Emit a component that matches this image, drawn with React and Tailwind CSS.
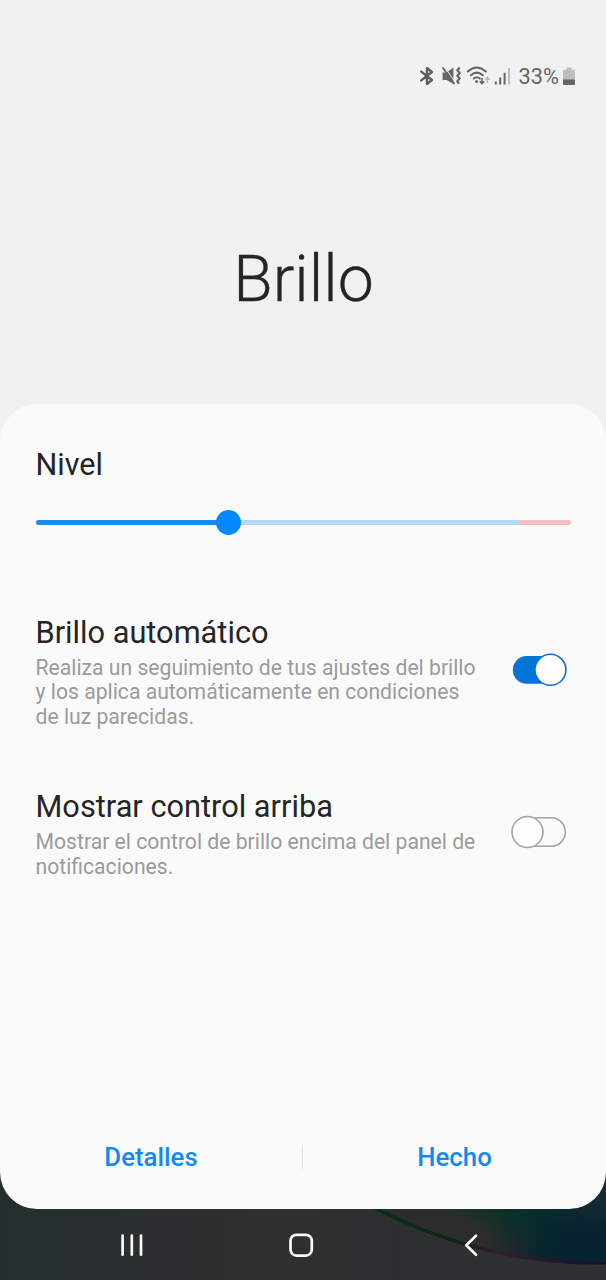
function StatusIcons() {
  return (
    <svg width="94" height="24" viewBox="416 64 94 24" fill="none" aria-hidden="true">
      {/* bluetooth */}
      <path d="M421.2 71.6 L432 80 L427 84 V68 L432 72 L421.2 80.4" stroke="#5f5f5f" strokeWidth="2.4" strokeLinejoin="round" strokeLinecap="round" />
      {/* muted, vibrate */}
      <path d="M442.6 72.5 H446.6 L453.4 67.5 V84 L446.6 80 H442.6 Z" fill="#666" />
      <path d="M444.6 67 L455.2 82.2" stroke="#f1f1f1" strokeWidth="0.9" />
      <path d="M443 68 L454 83.4" stroke="#666" strokeWidth="1.8" strokeLinecap="round" />
      <path d="M459.6 67.5 L457.4 70.3 L459.6 73 L457.4 75.7 L459.6 78.4 L457.4 81 L459 83.8" stroke="#666" strokeWidth="2.2" />
      {/* wifi */}
      <g stroke="#666" strokeWidth="2" strokeLinecap="round">
        <path d="M467.8 71.5 Q476.8 63.6 485.8 71.5" />
        <path d="M470.8 75.2 Q476.8 70 482.8 75.2" />
        <path d="M473.8 78.6 Q476.8 76 479.8 78.6" />
      </g>
      <circle cx="476.6" cy="81.6" r="1.5" fill="#666" />
      <path d="M482 78 V83.5 M479.8 81.4 L482 83.7 L484.2 81.4" stroke="#666" strokeWidth="1.6" />
      <path d="M487.4 83 V77.5 M485.2 79.8 L487.4 77.4 L489.6 79.8" stroke="#b7b7b7" strokeWidth="1.5" />
      {/* signal */}
      <path d="M495.8 81.4 V84.4 M500.2 77.5 V84.4 M504.6 72.8 V84.4" stroke="#666" strokeWidth="2" />
      <path d="M509 68 V84.4" stroke="#bebebe" strokeWidth="2" />
    </svg>
  );
}

function Battery() {
  return (
    <svg className="mt-[2px]" width="14" height="20" viewBox="0 0 14 20" aria-hidden="true">
      <path d="M4.5 0.6 H9.5 V2.8 H12 Q13 2.8 13 3.8 V13 H1 V3.8 Q1 2.8 2 2.8 H4.5 Z" fill="#bdbdbd" />
      <path d="M1 12.6 H13 V17 Q13 18 12 18 H2 Q1 18 1 17 Z" fill="#666" />
    </svg>
  );
}

function Toggle({ on }) {
  return on ? (
    <svg className="shrink-0" width="56" height="34" viewBox="0 0 56 34" role="switch" aria-checked="true">
      <rect x="1.8" y="3.1" width="52" height="27.6" rx="13.8" fill="#0375d8" />
      <circle cx="39.4" cy="16.8" r="15.5" fill="#fdfdfd" stroke="#0b72cc" strokeWidth="1.6" />
    </svg>
  ) : (
    <svg className="shrink-0" width="56" height="34" viewBox="0 0 56 34" role="switch" aria-checked="false">
      <rect x="2" y="2.7" width="52.3" height="28.6" rx="14.3" fill="#fbfbfb" stroke="#a2a2a2" strokeWidth="1.5" />
      <circle cx="16.5" cy="17" r="15.5" fill="#fdfdfd" stroke="#a2a2a2" strokeWidth="1.6" />
    </svg>
  );
}

function Setting({ title, lines, children }) {
  return (
    <div className="flex justify-between">
      <div className="whitespace-nowrap">
        <h2 className="h-[41px] text-[30.75px] leading-[36px]">{title}</h2>
        <p className="text-[21.17px] leading-[24.7px] text-[#9b9b9b]">
          {lines.map((line) => (
            <span key={line} className="block">{line}</span>
          ))}
        </p>
      </div>
      {children}
    </div>
  );
}

function NavigationBar() {
  return (
    <svg className="block" width="606" height="110" viewBox="0 1170 606 110" aria-label="Navegación">
      <defs>
        <linearGradient id="base" x1="0" y1="0" x2="1" y2="0">
          <stop offset="0" stopColor="#252e2e" />
          <stop offset="0.45" stopColor="#2f2f2f" />
          <stop offset="0.65" stopColor="#2c2f30" />
          <stop offset="1" stopColor="#303033" />
        </linearGradient>
        <linearGradient id="disc" gradientUnits="userSpaceOnUse" x1="470" y1="1250" x2="506" y2="1180">
          <stop offset="0" stopColor="#2d2c2d" />
          <stop offset="0.25" stopColor="#2e2c2a" />
          <stop offset="0.62" stopColor="#0b3229" />
          <stop offset="1" stopColor="#08332b" />
        </linearGradient>
        <linearGradient id="blue" gradientUnits="userSpaceOnUse" x1="505" y1="1205" x2="562" y2="1240">
          <stop offset="0" stopColor="#06232f" stopOpacity="0" />
          <stop offset="1" stopColor="#06232f" />
        </linearGradient>
        <linearGradient id="corner" gradientUnits="userSpaceOnUse" x1="585" y1="1232" x2="600" y2="1180">
          <stop offset="0" stopColor="#1d2d33" stopOpacity="0" />
          <stop offset="1" stopColor="#1d2d33" />
        </linearGradient>
        <linearGradient id="rim" gradientUnits="userSpaceOnUse" x1="375" y1="0" x2="606" y2="0">
          <stop offset="0" stopColor="#08301c" />
          <stop offset="0.35" stopColor="#0b2316" />
          <stop offset="0.52" stopColor="#371c2b" />
          <stop offset="1" stopColor="#12122c" />
        </linearGradient>
      </defs>
      <rect y="1170" width="606" height="110" fill="url(#base)" />
      <path d="M300 1170 L378 1209 Q487 1265 606 1263 V1170 Z" fill="url(#disc)" />
      <path d="M300 1170 L378 1209 Q487 1265 606 1263 V1170 Z" fill="url(#blue)" />
      <path d="M300 1170 L378 1209 Q487 1265 606 1263 V1170 Z" fill="url(#corner)" />
      <path d="M376 1207 Q487 1264 606 1262.6 V1264 Q487 1267 374 1209 Z" fill="url(#rim)" stroke="url(#rim)" strokeWidth="1" />
      <g fill="none" stroke="#f8f8f8" strokeWidth="2.7" strokeLinecap="round" strokeLinejoin="round">
        <path d="M122.6 1235.5 V1254.7 M131.8 1235.5 V1254.7 M141 1235.5 V1254.7" />
        <rect x="290.5" y="1234.8" width="21.3" height="20.8" rx="6" />
        <path d="M476 1235.7 L466.3 1245.2 L476 1254.7" />
      </g>
    </svg>
  );
}

export default function App() {
  return (
    <div className="flex h-[1280px] w-[606px] flex-col overflow-hidden bg-[#f1f1f1] font-['Roboto',sans-serif] text-[#252525]">
      <header className="flex h-[403.5px] shrink-0 flex-col">
        <div className="mt-[64px] flex h-[24px] items-center justify-end pr-[30px] text-[#666]">
          <StatusIcons />
          <span className="ml-[9px] mr-[3px] pt-[2px] text-[21.8px] leading-[24px]">33%</span>
          <Battery />
        </div>
        <h1 className="mt-[151px] pl-px text-center text-[64.4px] leading-[80px] font-light [-webkit-text-stroke:0.3px_#252525]">Brillo</h1>
      </header>

      <div className="relative z-10 flex h-[805.5px] shrink-0 flex-col rounded-[37px] bg-[#fafafa] pt-[43px]">
        <section className="px-[35.5px]">
          <h2 className="text-[30.5px] leading-[36px]">Nivel</h2>
          <div className="relative mt-[37.5px] flex h-[5px] w-[535px] overflow-visible rounded-full">
            <div className="w-[193px] rounded-l-full bg-[#148cf0]" />
            <div className="w-[290px] bg-[#b2d8f5]" />
            <div className="flex-1 rounded-r-full bg-[#f6bfbf]" />
            <div className="absolute -top-[10px] left-[180.3px] size-[25px] rounded-full bg-[#0389ff]" />
          </div>
        </section>

        <section className="mt-[89.5px] flex h-[174.7px] flex-col pl-[35.5px] pr-[39px]">
          <Setting
            title="Brillo automático"
            lines={["Realiza un seguimiento de tus ajustes del brillo", "y los aplica automáticamente en condiciones", "de luz parecidas."]}
          >
            <div className="pt-[38px]"><Toggle on /></div>
          </Setting>
        </section>
        <section className="flex flex-col pl-[35.5px] pr-[39px]">
          <Setting
            title="Mostrar control arriba"
            lines={["Mostrar el control de brillo encima del panel de", "notificaciones."]}
          >
            <div className="pt-[26px]"><Toggle /></div>
          </Setting>
        </section>

        <footer className="mb-[36px] mt-auto flex h-[32px] items-center text-[25.8px] leading-[32px] font-medium text-[#148af0]">
          <button className="w-[302px] text-center">Detalles</button>
          <div className="h-[24px] w-px bg-[#e3e3e3]" />
          <button className="flex-1 text-center">Hecho</button>
        </footer>
      </div>

      <nav className="-mt-[39px] shrink-0">
        <NavigationBar />
      </nav>
    </div>
  );
}
